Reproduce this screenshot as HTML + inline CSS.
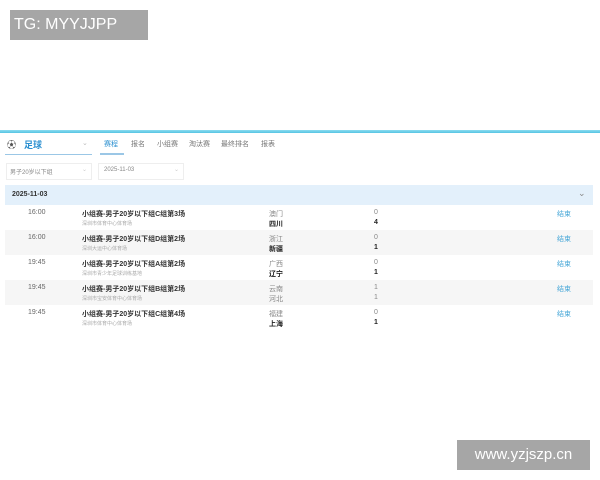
<!DOCTYPE html>
<html><head><meta charset="utf-8"><style>
body{margin:0;width:600px;height:480px;background:#fff;font-family:"Liberation Sans","Noto Sans CJK SC",sans-serif;position:relative;overflow:hidden;color:#333}
.a{position:absolute;white-space:nowrap}
.tg{left:10px;top:10px;width:138px;height:30px;background:#a6a6a6;color:#fff;font-size:16px;line-height:30px;padding-left:4px;box-sizing:border-box}
.wm{left:457px;top:440px;width:133px;height:30px;background:#a6a6a6;color:#fff;font-size:15px;line-height:30px;text-align:center}
.row{position:absolute;left:5px;width:588px;height:25px}
.t{font-size:7px;color:#666}
.ti{font-size:7px;font-weight:bold;color:#333}
.v{font-size:5px;color:#aaa}
.tm{font-size:7px;color:#888}
.tb{font-size:7px;color:#222;font-weight:bold}
.e{font-size:7px;color:#4aa8d8}
</style></head><body>
<div class="a tg">TG: MYYJJPP</div>
<div class="a" style="left:0;top:130px;width:600px;height:3px;background:linear-gradient(#6fd3ec,#2bb6dc);opacity:.8"></div>
<div class="a" style="left:7px;top:138px;font-size:9px;color:#555">⚽</div>
<div class="a" style="left:24px;top:138px;font-size:9px;color:#2a8fd0;font-weight:bold">足球</div>
<div class="a" style="left:82px;top:139px;font-size:7px;color:#bbb">⌄</div>
<div class="a" style="left:5px;top:154px;width:87px;height:1px;background:#9bc7e6"></div>
<div class="a" style="left:104px;top:139px;font-size:7px;color:#2a8fd0">赛程</div>
<div class="a" style="left:100px;top:153px;width:24px;height:2px;background:#9bc7e6"></div>
<div class="a" style="left:131px;top:139px;font-size:7px;color:#777">报名</div>
<div class="a" style="left:157px;top:139px;font-size:7px;color:#777">小组赛</div>
<div class="a" style="left:189px;top:139px;font-size:7px;color:#777">淘汰赛</div>
<div class="a" style="left:221px;top:139px;font-size:7px;color:#777">最终排名</div>
<div class="a" style="left:261px;top:139px;font-size:7px;color:#777">报表</div>
<div class="a" style="left:6px;top:163px;width:86px;height:17px;border:1px solid #eee;box-sizing:border-box"></div>
<div class="a" style="left:10px;top:167px;font-size:6px;color:#888">男子20岁以下组</div>
<div class="a" style="left:82px;top:166px;font-size:6px;color:#ccc">⌄</div>
<div class="a" style="left:98px;top:163px;width:86px;height:17px;border:1px solid #eee;box-sizing:border-box"></div>
<div class="a" style="left:104px;top:167px;font-size:6px;color:#888">2025-11-03</div>
<div class="a" style="left:174px;top:166px;font-size:6px;color:#ccc">⌄</div>
<div class="row" style="top:185px;height:20px;background:#e3f0fb"></div>
<div class="a" style="left:12px;top:191px;font-size:7px;font-weight:bold;color:#333">2025-11-03</div>
<div class="a" style="left:578px;top:188px;font-size:9px;color:#888">⌄</div>

<div class="row" style="top:205px"></div>
<div class="row" style="top:230px;background:#f6f6f6"></div>
<div class="row" style="top:255px"></div>
<div class="row" style="top:280px;background:#f6f6f6"></div>
<div class="row" style="top:305px"></div>

<div class="a t" style="left:28px;top:209px">16:00</div>
<div class="a ti" style="left:82px;top:209px">小组赛-男子20岁以下组C组第3场</div>
<div class="a v" style="left:82px;top:220px">深圳市体育中心体育场</div>
<div class="a tm" style="left:269px;top:209px">澳门</div><div class="a tb" style="left:269px;top:219px">四川</div>
<div class="a tm" style="left:374px;top:209px">0</div><div class="a tb" style="left:374px;top:219px">4</div>
<div class="a e" style="left:557px;top:209px">结束</div>

<div class="a t" style="left:28px;top:234px">16:00</div>
<div class="a ti" style="left:82px;top:234px">小组赛-男子20岁以下组D组第2场</div>
<div class="a v" style="left:82px;top:245px">深圳大运中心体育场</div>
<div class="a tm" style="left:269px;top:234px">浙江</div><div class="a tb" style="left:269px;top:244px">新疆</div>
<div class="a tm" style="left:374px;top:234px">0</div><div class="a tb" style="left:374px;top:244px">1</div>
<div class="a e" style="left:557px;top:234px">结束</div>

<div class="a t" style="left:28px;top:259px">19:45</div>
<div class="a ti" style="left:82px;top:259px">小组赛-男子20岁以下组A组第2场</div>
<div class="a v" style="left:82px;top:270px">深圳市青少年足球训练基地</div>
<div class="a tm" style="left:269px;top:259px">广西</div><div class="a tb" style="left:269px;top:269px">辽宁</div>
<div class="a tm" style="left:374px;top:259px">0</div><div class="a tb" style="left:374px;top:269px">1</div>
<div class="a e" style="left:557px;top:259px">结束</div>

<div class="a t" style="left:28px;top:284px">19:45</div>
<div class="a ti" style="left:82px;top:284px">小组赛-男子20岁以下组B组第2场</div>
<div class="a v" style="left:82px;top:295px">深圳市宝安体育中心体育场</div>
<div class="a tm" style="left:269px;top:284px">云南</div><div class="a tm" style="left:269px;top:294px">河北</div>
<div class="a tm" style="left:374px;top:284px">1</div><div class="a tm" style="left:374px;top:294px">1</div>
<div class="a e" style="left:557px;top:284px">结束</div>

<div class="a t" style="left:28px;top:309px">19:45</div>
<div class="a ti" style="left:82px;top:309px">小组赛-男子20岁以下组C组第4场</div>
<div class="a v" style="left:82px;top:320px">深圳市体育中心体育场</div>
<div class="a tm" style="left:269px;top:309px">福建</div><div class="a tb" style="left:269px;top:319px">上海</div>
<div class="a tm" style="left:374px;top:309px">0</div><div class="a tb" style="left:374px;top:319px">1</div>
<div class="a e" style="left:557px;top:309px">结束</div>

<div class="a wm">www.yzjszp.cn</div>
</body></html>
